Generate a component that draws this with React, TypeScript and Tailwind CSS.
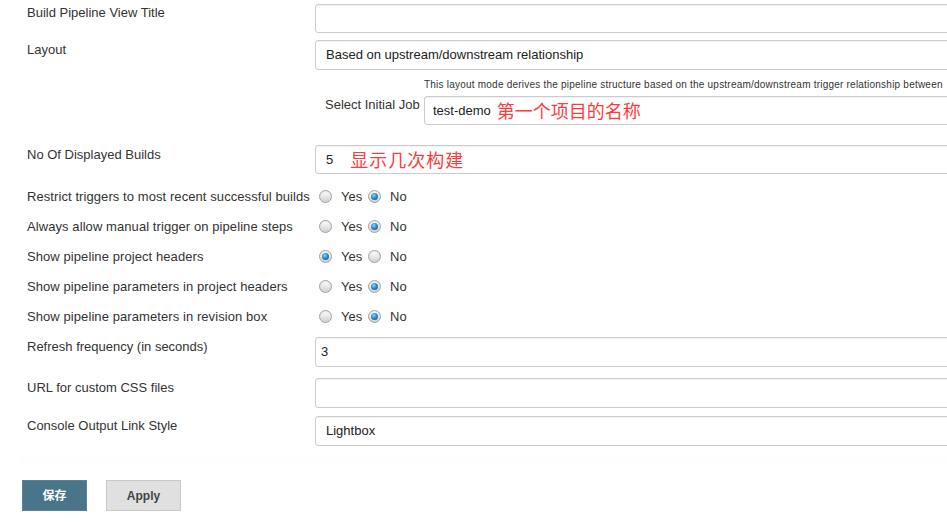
import React from "react";

const font = { fontFamily: '"Liberation Sans", Arial, "Noto Sans CJK SC", sans-serif' };

function Radio({ checked }: { checked?: boolean }) {
  return (
    <span className="inline-flex items-center justify-center w-[13px] h-[13px] rounded-full border border-[#a0a0a0] bg-gradient-to-b from-[#ffffff] to-[#d0d0d0] shadow-[inset_0_1px_1px_rgba(0,0,0,0.08)]">
      {checked && (
        <span className="block w-[7px] h-[7px] rounded-full bg-[radial-gradient(circle_at_40%_35%,#8fd4f5_0%,#2a8ccb_45%,#0a4a78_100%)]" />
      )}
    </span>
  );
}

function Field({ children, className = "", pad = "pl-[10px]" }: { children?: React.ReactNode; className?: string; pad?: string }) {
  return (
    <div
      className={
        "w-[700px] shrink-0 flex items-center border border-[#cccccc] rounded-[3px] bg-white shadow-[inset_0_1px_1px_rgba(0,0,0,0.06)] text-[13px] text-[#222] " +
        pad +
        " " +
        className
      }
    >
      {children}
    </div>
  );
}

function RadioRow({ label, yes }: { label: string; yes: boolean }) {
  return (
    <div className="flex items-center h-[30px]">
      <div className="w-[292px] shrink-0 text-[13px] leading-[17px] tracking-[0.08px] text-[#333]">{label}</div>
      <div className="flex items-center text-[13px] text-[#333]">
        <Radio checked={yes} />
        <span className="ml-[9px] mt-[1px] w-[27px]">Yes</span>
        <Radio checked={!yes} />
        <span className="ml-[9px] mt-[1px]">No</span>
      </div>
    </div>
  );
}

export default function App() {
  return (
    <div className="w-[947px] h-[522px] overflow-hidden bg-white" style={font}>
      <div className="pl-[27px]">
        {/* Row 1 */}
        <div className="flex items-start pt-[4px]">
          <div className="w-[288px] shrink-0 text-[13px] leading-[17px] text-[#333]">Build Pipeline View Title</div>
          <Field className="h-[29px]" />
        </div>
        {/* Layout */}
        <div className="flex items-start mt-[7px]">
          <div className="w-[288px] shrink-0 pt-[1px] text-[13px] leading-[17px] text-[#333]">Layout</div>
          <div className="flex flex-col">
            <Field className="h-[30px]">Based on upstream/downstream relationship</Field>
            <div className="pl-[109px] mt-[9px] text-[10px] leading-[12px] tracking-[0.22px] text-[#333] whitespace-nowrap">
              This layout mode derives the pipeline structure based on the upstream/downstream trigger relationship between
            </div>
            <div className="flex items-start mt-[5px] pl-[10px]">
              <div className="w-[99px] shrink-0 text-[13px] leading-[17px] text-[#333]">Select Initial Job</div>
              <Field className="h-[29px]" pad="pl-[8px]">
                <span>test-demo</span>
                <span className="ml-[6px] text-[18px] text-[#ff3b3b]" style={{ fontFamily: '"Noto Sans CJK SC", sans-serif' }}>
                  第一个项目的名称
                </span>
              </Field>
            </div>
          </div>
        </div>
        {/* No of displayed builds */}
        <div className="flex items-start mt-[20px]">
          <div className="w-[288px] shrink-0 pt-[1px] text-[13px] leading-[17px] text-[#333]">No Of Displayed Builds</div>
          <Field className="h-[29px]">
            <span>5</span>
            <span className="ml-[17px] text-[18px] tracking-[1px] text-[#ff3b3b]" style={{ fontFamily: '"Noto Sans CJK SC", sans-serif' }}>
              显示几次构建
            </span>
          </Field>
        </div>
        {/* Radio rows */}
        <div className="mt-[7px]">
          <RadioRow label="Restrict triggers to most recent successful builds" yes={false} />
          <RadioRow label="Always allow manual trigger on pipeline steps" yes={false} />
          <RadioRow label="Show pipeline project headers" yes={true} />
          <RadioRow label="Show pipeline parameters in project headers" yes={false} />
          <RadioRow label="Show pipeline parameters in revision box" yes={false} />
        </div>
        {/* Refresh */}
        <div className="flex items-start mt-[6px]">
          <div className="w-[288px] shrink-0 pt-[1px] text-[13px] leading-[17px] text-[#333]">Refresh frequency (in seconds)</div>
          <Field className="h-[30px]" pad="pl-[5px]">3</Field>
        </div>
        <div className="flex items-start mt-[11px]">
          <div className="w-[288px] shrink-0 pt-[1px] text-[13px] leading-[17px] text-[#333]">URL for custom CSS files</div>
          <Field className="h-[30px]" />
        </div>
        <div className="flex items-start mt-[8px]">
          <div className="w-[288px] shrink-0 pt-[1px] text-[13px] leading-[17px] text-[#333]">Console Output Link Style</div>
          <Field className="h-[30px]">Lightbox</Field>
        </div>
      </div>
      <div className="ml-[20px] mt-[7px] h-[12px] bg-[#fefefe]" />
      <div className="flex items-center pl-[22px] mt-[15px] gap-[19px]">
        <button className="w-[65px] h-[31px] bg-[#4a7489] border border-[#56849a] text-white text-[12px] font-bold">
          保存
        </button>
        <button className="w-[75px] h-[31px] bg-[#e0e0e0] border border-[#c8c8c8] text-[#444] text-[12px] font-bold">
          Apply
        </button>
      </div>
    </div>
  );
}
